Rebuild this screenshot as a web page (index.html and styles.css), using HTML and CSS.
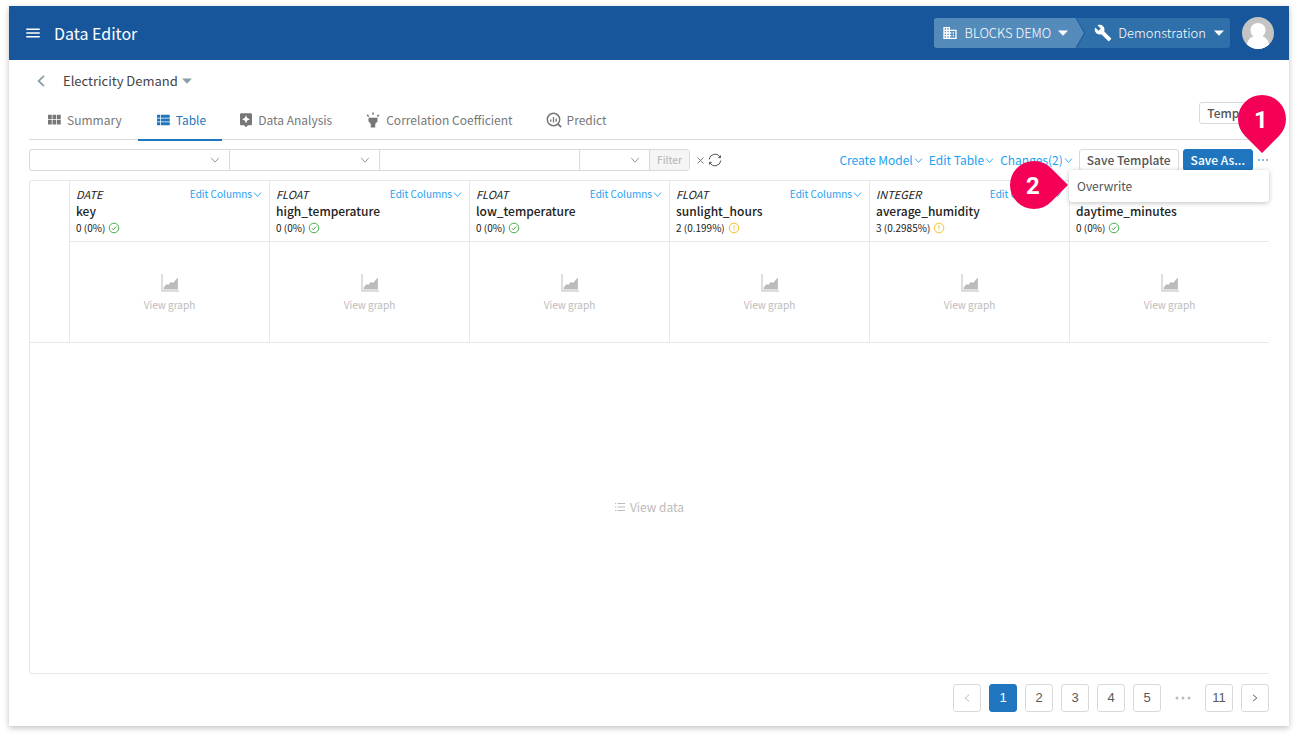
FILE: index.html
```html
<!DOCTYPE html>
<html lang="en">
<head>
<meta charset="utf-8">
<title>Data Editor</title>
<link rel="stylesheet" href="styles.css">
</head>
<body>
<svg class="sprite" aria-hidden="true">
  <symbol id="chevron" viewBox="0 0 10 10"><path d="M1.2 2.8 5 7.2 8.8 2.8" fill="none" stroke="currentColor"/></symbol>
  <symbol id="caret" viewBox="0 0 10 6"><path d="M0 .5h10L5 5.8z" fill="currentColor"/></symbol>
  <symbol id="ok" viewBox="0 0 12 12"><g fill="none" stroke="currentColor"><circle cx="6" cy="6" r="4.8"/><path d="M3.8 6.1 5.4 7.8 8.3 4.4"/></g></symbol>
  <symbol id="warn" viewBox="0 0 12 12"><g fill="none" stroke="currentColor"><circle cx="6" cy="6" r="4.8"/><path d="M6 3.2v3.6M6 7.8v1"/></g></symbol>
  <symbol id="graph" viewBox="0 0 18 18"><path d="M.5 0h1v16.4H18v1.1H.5z" fill="currentColor"/><path d="M2.6 15.4v-1.8l3-3.5 1.6 1L9.8 8l2.2 1 4.900-5.500v11.900z" fill="currentColor"/></symbol>
</svg>
<div class="app">
  <header class="topbar">
    <button class="icon-btn" type="button" aria-label="Menu"><svg width="18" height="18" viewBox="0 0 24 24"><path fill="currentColor" d="M3 18h18v-2H3zm0-5h18v-2H3zm0-7v2h18V6z"/></svg></button>
    <h1 class="app-title">Data Editor</h1>
    <div class="switcher">
      <button class="switch switch-org" type="button"><svg width="16" height="16" viewBox="0 0 24 24"><path fill="currentColor" d="M12 7V3H2v18h20V7H12zM6 19H4v-2h2v2zm0-4H4v-2h2v2zm0-4H4V9h2v2zm0-4H4V5h2v2zm4 12H8v-2h2v2zm0-4H8v-2h2v2zm0-4H8V9h2v2zm0-4H8V5h2v2zm10 12h-8v-2h2v-2h-2v-2h2v-2h-2V9h8v10zm-2-8h-2v2h2v-2zm0 4h-2v2h2v-2z"/></svg><span>BLOCKS DEMO</span><svg width="10" height="6"><use href="#caret"/></svg></button>
      <svg class="switch-arrow" width="9" height="30" viewBox="0 0 9 30"><path d="M0 0 8.500 15 0 30z" fill="#558bbb"/><path d="M0 0 8.500 15 0 30" fill="none" stroke="#17569b"/></svg>
      <button class="switch" type="button"><svg width="18" height="18" viewBox="0 0 24 24"><path fill="currentColor" d="M22.700 19l-9.100-9.100c.9-2.300.4-5-1.500-6.900-2-2-5-2.400-7.400-1.300L9 6 6 9 1.600 4.700C.4 7.100.9 10.100 2.900 12.100c1.900 1.900 4.600 2.400 6.900 1.500l9.100 9.100c.4.4 1 .4 1.400 0l2.300-2.300c.5-.4.5-1.100.1-1.400z"/></svg><span>Demonstration</span><svg class="caret" width="10" height="6"><use href="#caret"/></svg></button>
    </div>
    <button class="icon-btn" type="button" aria-label="Account"><svg width="32" height="32" viewBox="0 0 32 32"><clipPath id="disc"><circle cx="16" cy="16" r="16"/></clipPath><g clip-path="url(#disc)"><path fill="#c4c4c4" d="M0 0h32v32H0z"/><path fill="#fff" d="M16 6c4.200 0 7.500 3 7.500 7 0 3-1.300 5.200-3 6.500 3.500 1 6.500 3.500 7.500 12.500H4c1-9 4-11.500 7.500-12.500-1.700-1.300-3-3.500-3-6.500 0-4 3.300-7 7.500-7z"/></g></svg></button>
  </header>

  <main class="content">
    <div class="crumb">
      <button class="icon-btn back" type="button" aria-label="Back"><svg width="8" height="12" viewBox="0 0 8 12"><path d="M7 .8 1.600 6 7 11.200" fill="none" stroke="currentColor" stroke-width="1.800"/></svg></button>
      <button class="doc-name" type="button">Electricity Demand <svg width="10" height="6"><use href="#caret"/></svg></button>
    </div>

    <div class="tabbar">
      <nav class="tabs">
        <a class="tab" href="#"><svg width="18" height="18" viewBox="0 0 24 24"><path fill="currentColor" d="M4 11h5V5H4v6zm0 7h5v-6H4v6zm6 0h5v-6h-5v6zm6 0h5v-6h-5v6zm-6-7h5V5h-5v6zm6-6v6h5V5h-5z"/></svg>Summary</a>
        <a class="tab tab-active" href="#"><svg width="18" height="18" viewBox="0 0 24 24"><path fill="currentColor" d="M4 14h4v-4H4v4zm0 5h4v-4H4v4zM4 9h4V5H4v4zm5 5h12v-4H9v4zm0 5h12v-4H9v4zM9 5v4h12V5H9z"/></svg>Table</a>
        <a class="tab" href="#"><svg width="16" height="16" viewBox="0 0 24 24"><path fill="currentColor" d="M19 2H5c-1.110 0-2 .9-2 2v14c0 1.100.89 2 2 2h4l3 3 3-3h4c1.100 0 2-.9 2-2V4c0-1.100-.9-2-2-2zm-5.120 10.880L12 17l-1.880-4.120L6 11l4.120-1.880L12 5l1.880 4.120L18 11l-4.120 1.880z"/></svg>Data Analysis</a>
        <a class="tab" href="#"><svg width="18" height="18" viewBox="0 0 24 24"><path fill="currentColor" d="M6 14l3 3v5h6v-5l3-3V9H6zm5-12h2v3h-2zM3.500 5.875L4.914 4.460l2.120 2.122L5.620 7.997zm13.460.71l2.123-2.120 1.414 1.414L18.375 8z"/></svg>Correlation Coefficient</a>
        <a class="tab" href="#"><svg width="18" height="18" viewBox="-1 -1 18 18"><g fill="none" stroke="currentColor"><circle cx="7.500" cy="7.500" r="6.200" stroke-width="1.500"/><path d="M4.800 7.500v2.300M7.500 5v5.500M10.200 6.500v3.300" stroke-width="1.300"/><path d="m11.800 11.800 3.400 3.400" stroke-width="1.800"/></g></svg>Predict</a>
      </nav>
      <button class="btn" type="button">Template</button>
    </div>

    <div class="toolbar">
      <form class="filter">
        <label class="field field-column"><select aria-label="Column"><option></option></select><svg width="10" height="10"><use href="#chevron"/></svg></label>
        <label class="field field-operator"><select aria-label="Operator"><option></option></select><svg width="10" height="10"><use href="#chevron"/></svg></label>
        <label class="field field-value"><input type="text" aria-label="Value"></label>
        <label class="field field-join"><select aria-label="Join"><option></option></select><svg width="10" height="10"><use href="#chevron"/></svg></label>
        <button class="filter-btn" type="button" disabled>Filter</button>
      </form>
      <button class="icon-btn clear" type="button" aria-label="Clear"><svg width="7" height="7" viewBox="0 0 7 7"><path d="m.6.6 5.800 5.800M6.400.6.600 6.400" fill="none" stroke="currentColor"/></svg></button>
      <button class="icon-btn reload" type="button" aria-label="Reload"><svg width="14" height="14" viewBox="0 0 14 14"><path d="M1.200 6.500A5.800 5.800 0 0 1 12.200 4.500M12.800 7.500A5.800 5.800 0 0 1 1.800 9.500M12.500 2.500v2.200h-2.200M1.500 11.500V9.300h2.200" fill="none" stroke="currentColor"/></svg></button>
      <div class="actions">
        <button class="link" type="button">Create Model<svg width="9" height="9"><use href="#chevron"/></svg></button>
        <button class="link" type="button">Edit Table<svg width="9" height="9"><use href="#chevron"/></svg></button>
        <button class="link" type="button">Changes(2)<svg width="9" height="9"><use href="#chevron"/></svg></button>
        <button class="btn" type="button">Save Template</button>
        <button class="btn btn-primary" type="button">Save As...</button>
        <div class="more">
          <button class="icon-btn dots" type="button" aria-label="More"><svg width="10" height="4" viewBox="0 0 10 4"><path d="M0 1.500h2v1H0zM4 1.500h2v1H4zM8 1.500h2v1H8z" fill="currentColor"/></svg></button>
          <span class="pin pin-down"><b>1</b></span>
          <div class="menu">
            <button class="menu-item" type="button">Overwrite</button>
            <span class="pin pin-right"><b>2</b></span>
          </div>
        </div>
      </div>
    </div>

    <section class="grid">
      <table class="columns">
        <thead>
          <tr>
            <td class="gutter" rowspan="2"></td>
            <th><div class="col-top"><i>DATE</i><button class="link link-small" type="button">Edit Columns<svg width="9" height="9"><use href="#chevron"/></svg></button></div><div class="col-name">key</div><div class="col-stat">0 (0%)<svg class="ok" width="12" height="12"><use href="#ok"/></svg></div></th>
            <th><div class="col-top"><i>FLOAT</i><button class="link link-small" type="button">Edit Columns<svg width="9" height="9"><use href="#chevron"/></svg></button></div><div class="col-name">high_temperature</div><div class="col-stat">0 (0%)<svg class="ok" width="12" height="12"><use href="#ok"/></svg></div></th>
            <th><div class="col-top"><i>FLOAT</i><button class="link link-small" type="button">Edit Columns<svg width="9" height="9"><use href="#chevron"/></svg></button></div><div class="col-name">low_temperature</div><div class="col-stat">0 (0%)<svg class="ok" width="12" height="12"><use href="#ok"/></svg></div></th>
            <th><div class="col-top"><i>FLOAT</i><button class="link link-small" type="button">Edit Columns<svg width="9" height="9"><use href="#chevron"/></svg></button></div><div class="col-name">sunlight_hours</div><div class="col-stat">2 (0.199%)<svg class="warn" width="12" height="12"><use href="#warn"/></svg></div></th>
            <th><div class="col-top"><i>INTEGER</i><button class="link link-small" type="button">Edit Columns<svg width="9" height="9"><use href="#chevron"/></svg></button></div><div class="col-name">average_humidity</div><div class="col-stat">3 (0.2985%)<svg class="warn" width="12" height="12"><use href="#warn"/></svg></div></th>
            <th><div class="col-top"></div><div class="col-name">daytime_minutes</div><div class="col-stat">0 (0%)<svg class="ok" width="12" height="12"><use href="#ok"/></svg></div></th>
          </tr>
          <tr>
            <td><button class="view-graph" type="button"><svg width="18" height="18"><use href="#graph"/></svg>View graph</button></td>
            <td><button class="view-graph" type="button"><svg width="18" height="18"><use href="#graph"/></svg>View graph</button></td>
            <td><button class="view-graph" type="button"><svg width="18" height="18"><use href="#graph"/></svg>View graph</button></td>
            <td><button class="view-graph" type="button"><svg width="18" height="18"><use href="#graph"/></svg>View graph</button></td>
            <td><button class="view-graph" type="button"><svg width="18" height="18"><use href="#graph"/></svg>View graph</button></td>
            <td><button class="view-graph" type="button"><svg width="18" height="18"><use href="#graph"/></svg>View graph</button></td>
          </tr>
        </thead>
      </table>
      <button class="view-data" type="button"><svg width="10" height="10" viewBox="0 0 10 10"><path d="M0 1.500h1.200M0 5h1.200M0 8.500h1.200M2.500 1.500H10M2.500 5H10M2.500 8.500H10" fill="none" stroke="currentColor"/></svg>View data</button>
    </section>

    <nav class="pages" aria-label="Pages">
      <button class="page page-off" type="button" aria-label="Previous" disabled><svg width="6" height="8" viewBox="0 0 6 8"><path d="M5 .8 1.200 4 5 7.200" fill="none" stroke="currentColor"/></svg></button>
      <button class="page page-current" type="button">1</button>
      <button class="page" type="button">2</button>
      <button class="page" type="button">3</button>
      <button class="page" type="button">4</button>
      <button class="page" type="button">5</button>
      <span class="page-gap"><svg width="16" height="4" viewBox="0 0 16 4"><g fill="currentColor"><circle cx="2" cy="2" r="1.500"/><circle cx="8" cy="2" r="1.500"/><circle cx="14" cy="2" r="1.500"/></g></svg></span>
      <button class="page" type="button">11</button>
      <button class="page" type="button" aria-label="Next"><svg width="6" height="8" viewBox="0 0 6 8"><path d="M1 .8 4.800 4 1 7.200" fill="none" stroke="currentColor"/></svg></button>
    </nav>
  </main>
</div>
</body>
</html>
```
FILE: styles.css
```css
* { box-sizing: border-box; }

body {
  display: flex;
  min-height: 100vh;
  margin: 0;
  padding: 6px 9px 12px;
  background: #fff;
  color: #222;
  font: 12px/20px "Noto Sans CJK JP", "Noto Sans", sans-serif;
}

svg { display: block; flex: none; }
.sprite { position: absolute; width: 0; height: 0; }

button, input, select {
  margin: 0;
  padding: 0;
  border: 0;
  border-radius: 0;
  background: none;
  color: inherit;
  font: inherit;
}

.app {
  display: flex;
  flex: 1;
  flex-direction: column;
  min-width: 0;
  background: #fff;
  box-shadow: 0 2px 6px rgba(0, 0, 0, 0.25);
}

.icon-btn { display: flex; align-items: center; justify-content: center; }

/* Top bar */
.topbar {
  display: flex;
  align-items: center;
  height: 54px;
  padding: 0 15px;
  background: #17569b;
  color: #fff;
}
.app-title { margin: 0 auto 0 12px; font-size: 16px; font-weight: 400; }
.switcher {
  display: flex;
  height: 30px;
  margin-right: 12px;
  overflow: hidden;
  border-radius: 3px;
  background: #3070aa;
}
.switch {
  display: flex;
  align-items: center;
  gap: 6px;
  padding: 0 6px 0 9px;
  font-size: 13px;
  font-weight: 300;
}
.switch-org { gap: 7px; padding: 0 8px; background: #558bbb; }
.caret { margin-left: 2px; }

/* Document name */
.crumb { display: flex; align-items: center; height: 42px; padding-left: 8px; }
.back { color: #8aa0a8; }
.doc-name {
  display: flex;
  align-items: center;
  gap: 4px;
  margin-left: 18px;
  color: #444;
  font-size: 13px;
}
.doc-name svg { color: #8aa0a8; }

.content { display: flex; flex: 1; flex-direction: column; padding: 0 20px 14px; }

/* Tabs */
.tabbar {
  display: flex;
  align-items: flex-start;
  justify-content: space-between;
  height: 38px;
  border-bottom: 1px solid #d9d9d9;
}
.tabs { display: flex; }
.tab {
  display: flex;
  align-items: center;
  gap: 4px;
  height: 39px;
  padding: 0 16px 1px;
  border-bottom: 2px solid transparent;
  color: #777;
  text-decoration: none;
}
.tab-active { border-color: #1f76bf; color: #1f76bf; }

.btn {
  height: 22px;
  padding: 0 7px;
  border: 1px solid #d9d9d9;
  border-radius: 3px;
  background: #fff;
  color: #555;
  font-weight: 500;
  white-space: nowrap;
}
.btn-primary { border-color: #1f76bf; background: #1f76bf; color: #fff; }

/* Toolbar */
.toolbar { display: flex; align-items: center; margin: 9px 0; }
.filter { display: flex; height: 22px; border: 1px solid #d9d9d9; border-radius: 3px; }
.field { position: relative; display: flex; border-right: 1px solid #d9d9d9; }
.field select, .field input { width: 100%; appearance: none; outline: 0; }
.field svg { position: absolute; top: 5px; right: 9px; color: #999; pointer-events: none; }
.field-column { width: 200px; }
.field-operator { width: 150px; }
.field-value { width: 200px; }
.field-join { width: 70px; }
.filter-btn { width: 39px; background: #f5f5f5; color: #bbb; font-size: 10px; font-weight: 500; }
.clear { margin: 0 4px 0 7px; color: #777; }
.reload { color: #555; }

.actions { display: flex; align-items: center; gap: 4px; margin-left: auto; }
.link {
  display: flex;
  align-items: center;
  gap: 1px;
  padding-right: 2px;
  color: #1da1f2;
  white-space: nowrap;
}
.link-small { padding-right: 1px; font-size: 10px; }
.more { position: relative; display: flex; align-items: center; height: 22px; padding: 0 1px; }
.dots { height: 22px; color: #1f76bf; }

.menu {
  position: absolute;
  z-index: 1;
  top: 21px;
  right: 0;
  width: 200px;
  border-radius: 3px;
  background: #fff;
  box-shadow: 0 1px 5px rgba(0, 0, 0, 0.25);
}
.menu-item { display: block; width: 100%; padding: 6px 8px; color: #555; text-align: left; }

/* Numbered callouts */
.pin {
  position: absolute;
  z-index: 2;
  display: flex;
  align-items: center;
  justify-content: center;
  width: 48px;
  height: 48px;
  padding: 2px 2px 0 0;
  color: #fff;
  font: 24px/24px Roboto, sans-serif;
}
.pin::before {
  content: "";
  position: absolute;
  inset: 0;
  border-radius: 50%;
  background: #f50057;
  transform: rotate(45deg);
}
.pin b { position: relative; }
.pin-down { right: -17px; bottom: 28px; }
.pin-down::before { border-bottom-right-radius: 0; }
.pin-right { top: -9px; right: 211px; }
.pin-right::before { border-top-right-radius: 0; }

/* Data grid */
.grid {
  display: flex;
  flex: 1;
  flex-direction: column;
  border: 1px solid #e8e8e8;
  border-right: 0;
  border-radius: 3px 0 0 3px;
}
.columns { width: 100%; border-spacing: 0; table-layout: fixed; }
.columns th, .columns td { padding: 0; border: solid #e8e8e8; border-width: 0 0 1px 1px; }
.columns th { padding: 3px 6px 5px; font-weight: 400; text-align: left; vertical-align: top; }
.columns .gutter { width: 39px; border-left: 0; }
.col-top { display: flex; justify-content: space-between; height: 19px; font-size: 11px; }
.link-small { height: 20px; }
.col-name { font-weight: 500; line-height: 16px; }
.col-stat { display: flex; align-items: center; gap: 3px; font-size: 10px; line-height: 17px; }
.ok { color: #4caf50; }
.warn { color: #fbc02d; }
.view-graph {
  display: flex;
  flex-direction: column;
  align-items: center;
  justify-content: center;
  gap: 3px;
  width: 100%;
  height: 100px;
  padding-top: 4px;
  color: #bbb;
  font-size: 10px;
}
.view-data {
  display: flex;
  flex: 1;
  align-items: center;
  justify-content: center;
  gap: 5px;
  padding-bottom: 2px;
  color: #bbb;
}

/* Pagination */
.pages { display: flex; justify-content: flex-end; gap: 8px; margin-top: 10px; }
.page, .page-gap {
  display: flex;
  align-items: center;
  justify-content: center;
  width: 28px;
  height: 28px;
  color: #595959;
  font: 13px/20px "Liberation Sans", Arial, sans-serif;
}
.page { border: 1px solid #d9d9d9; border-radius: 3px; }
.page-current { border-color: #1f76bf; background: #1f76bf; color: #fff; }
.page-off, .page-gap { color: #bbb; }
```
